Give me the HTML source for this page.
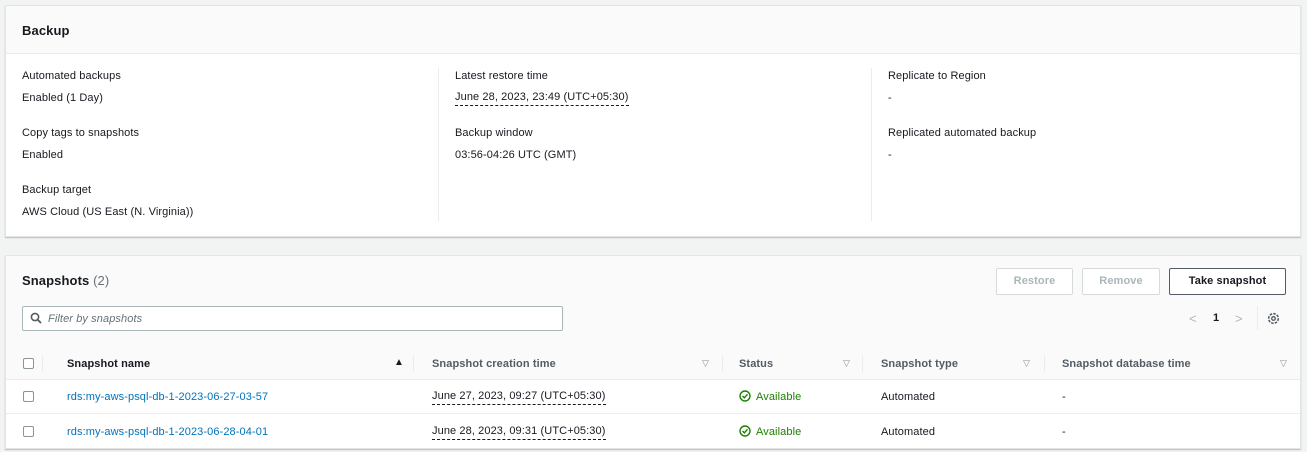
<!DOCTYPE html>
<html><head><meta charset="utf-8"><style>
*{box-sizing:border-box;margin:0;padding:0}
body{width:1307px;height:452px;background:#f2f3f3;font-family:"Liberation Sans",sans-serif;font-size:11px;letter-spacing:0.1px;color:#16191f;position:relative;overflow:hidden}
.p{position:absolute;background:#fff;border:1px solid #e3e5e5;box-shadow:0 1px 1px rgba(0,28,36,.25)}
.a{position:absolute;white-space:nowrap}
.b{font-weight:bold}
.dash{border-bottom:1px dashed #16191f;padding-bottom:2px}
.vl{position:absolute;width:1px;background:#eaeded}
.hl{position:absolute;height:1px;background:#eaeded}
.btn{position:absolute;border:1px solid #d5dbdb;background:#fff;color:#aab7b8;text-align:center;line-height:25px;font-weight:bold;border-radius:2px}
.cb{position:absolute;width:11px;height:11px;border:1px solid #8a9595;border-radius:2px;background:#fff}
.link{color:#0073bb}
.tri{color:#879596;font-size:9px}
.green{color:#1d8102}
</style></head><body>

<div class="p" style="left:5px;top:5px;width:1296px;height:232px">
  <div style="position:absolute;left:0;top:0;right:0;height:48px;background:#fafafa;border-bottom:1px solid #eaeded"></div>
</div>
<div class="a b" style="left:22px;top:23px;font-size:13px">Backup</div>
<div class="vl" style="left:438px;top:68px;height:153px"></div>
<div class="vl" style="left:871px;top:68px;height:153px"></div>

<div class="a" style="left:22px;top:70px">Automated backups</div>
<div class="a" style="left:22px;top:92px">Enabled (1 Day)</div>
<div class="a" style="left:22px;top:127px">Copy tags to snapshots</div>
<div class="a" style="left:22px;top:149px">Enabled</div>
<div class="a" style="left:22px;top:184px">Backup target</div>
<div class="a" style="left:22px;top:206px">AWS Cloud (US East (N. Virginia))</div>

<div class="a" style="left:455px;top:70px">Latest restore time</div>
<div class="a dash" style="left:455px;top:91px">June 28, 2023, 23:49 (UTC+05:30)</div>
<div class="a" style="left:455px;top:127px">Backup window</div>
<div class="a" style="left:455px;top:149px">03:56-04:26 UTC (GMT)</div>

<div class="a" style="left:888px;top:70px">Replicate to Region</div>
<div class="a" style="left:888px;top:92px">-</div>
<div class="a" style="left:888px;top:127px">Replicated automated backup</div>
<div class="a" style="left:888px;top:149px">-</div>

<div class="p" style="left:5px;top:255px;width:1296px;height:194px">
  <div style="position:absolute;left:0;top:0;right:0;height:124px;background:#fafafa;border-bottom:1px solid #eaeded"></div>
</div>
<div class="a b" style="left:22px;top:273px;font-size:13px">Snapshots <span style="font-weight:normal;color:#687078">(2)</span></div>
<div class="btn" style="left:996px;top:268px;width:77px;height:27px">Restore</div>
<div class="btn" style="left:1082px;top:268px;width:78px;height:27px">Remove</div>
<div class="btn" style="left:1169px;top:268px;width:117px;height:27px;border-color:#545b64;color:#16191f">Take snapshot</div>

<div style="position:absolute;left:22px;top:306px;width:541px;height:25px;background:#fff;border:1px solid #aab7b8;border-radius:2px"></div>
<svg class="a" style="left:30px;top:312px" width="12" height="12" viewBox="0 0 12 12"><circle cx="5" cy="5" r="3.6" fill="none" stroke="#545b64" stroke-width="1.6"/><path d="M7.6 7.6L11 11" stroke="#545b64" stroke-width="1.8"/></svg>
<div class="a" style="left:48px;top:313px;color:#687078;font-style:italic">Filter by snapshots</div>

<div class="a" style="left:1189px;top:311px;color:#aab7b8;font-size:13px">&lt;</div>
<div class="a b" style="left:1213px;top:312px">1</div>
<div class="a" style="left:1235px;top:311px;color:#aab7b8;font-size:13px">&gt;</div>
<div class="vl" style="left:1257px;top:306px;height:24px"></div>
<svg class="a" style="left:1267px;top:312px" width="13" height="13" viewBox="0 0 13 13"><circle cx="6.5" cy="6.5" r="4.8" fill="none" stroke="#545b64" stroke-width="1.6" stroke-dasharray="2.5 1.2"/><circle cx="6.5" cy="6.5" r="1.8" fill="none" stroke="#545b64" stroke-width="1.3"/></svg>

<div class="hl" style="left:6px;top:379px;width:1294px"></div>
<div class="hl" style="left:6px;top:413px;width:1294px"></div>
<div class="cb" style="left:23px;top:358px"></div>
<div class="vl" style="left:42px;top:355px;height:17px"></div>
<div class="a b" style="left:67px;top:358px">Snapshot name</div>
<div class="a" style="left:394px;top:357px;font-size:10px">▲</div>
<div class="vl" style="left:413px;top:355px;height:17px"></div>
<div class="a b" style="left:432px;top:358px;color:#545b64">Snapshot creation time</div>
<div class="a tri" style="left:702px;top:358px">▽</div>
<div class="vl" style="left:722px;top:355px;height:17px"></div>
<div class="a b" style="left:739px;top:358px;color:#545b64">Status</div>
<div class="a tri" style="left:843px;top:358px">▽</div>
<div class="vl" style="left:862px;top:355px;height:17px"></div>
<div class="a b" style="left:881px;top:358px;color:#545b64">Snapshot type</div>
<div class="a tri" style="left:1023px;top:358px">▽</div>
<div class="vl" style="left:1044px;top:355px;height:17px"></div>
<div class="a b" style="left:1062px;top:358px;color:#545b64">Snapshot database time</div>
<div class="a tri" style="left:1280px;top:358px">▽</div>

<div class="cb" style="left:23px;top:391px"></div>
<div class="a link" style="left:67px;top:391px">rds:my-aws-psql-db-1-2023-06-27-03-57</div>
<div class="a dash" style="left:432px;top:390px">June 27, 2023, 09:27 (UTC+05:30)</div>
<svg class="a" style="left:739px;top:390px" width="12" height="12" viewBox="0 0 12 12"><circle cx="6" cy="6" r="5" fill="none" stroke="#1d8102" stroke-width="1.4"/><path d="M3.5 6l1.8 1.8L8.5 4.3" fill="none" stroke="#1d8102" stroke-width="1.4"/></svg>
<div class="a green" style="left:756px;top:391px">Available</div>
<div class="a" style="left:881px;top:391px">Automated</div>
<div class="a" style="left:1062px;top:391px">-</div>

<div class="cb" style="left:23px;top:426px"></div>
<div class="a link" style="left:67px;top:426px">rds:my-aws-psql-db-1-2023-06-28-04-01</div>
<div class="a dash" style="left:432px;top:425px">June 28, 2023, 09:31 (UTC+05:30)</div>
<svg class="a" style="left:739px;top:425px" width="12" height="12" viewBox="0 0 12 12"><circle cx="6" cy="6" r="5" fill="none" stroke="#1d8102" stroke-width="1.4"/><path d="M3.5 6l1.8 1.8L8.5 4.3" fill="none" stroke="#1d8102" stroke-width="1.4"/></svg>
<div class="a green" style="left:756px;top:426px">Available</div>
<div class="a" style="left:881px;top:426px">Automated</div>
<div class="a" style="left:1062px;top:426px">-</div>

</body></html>
